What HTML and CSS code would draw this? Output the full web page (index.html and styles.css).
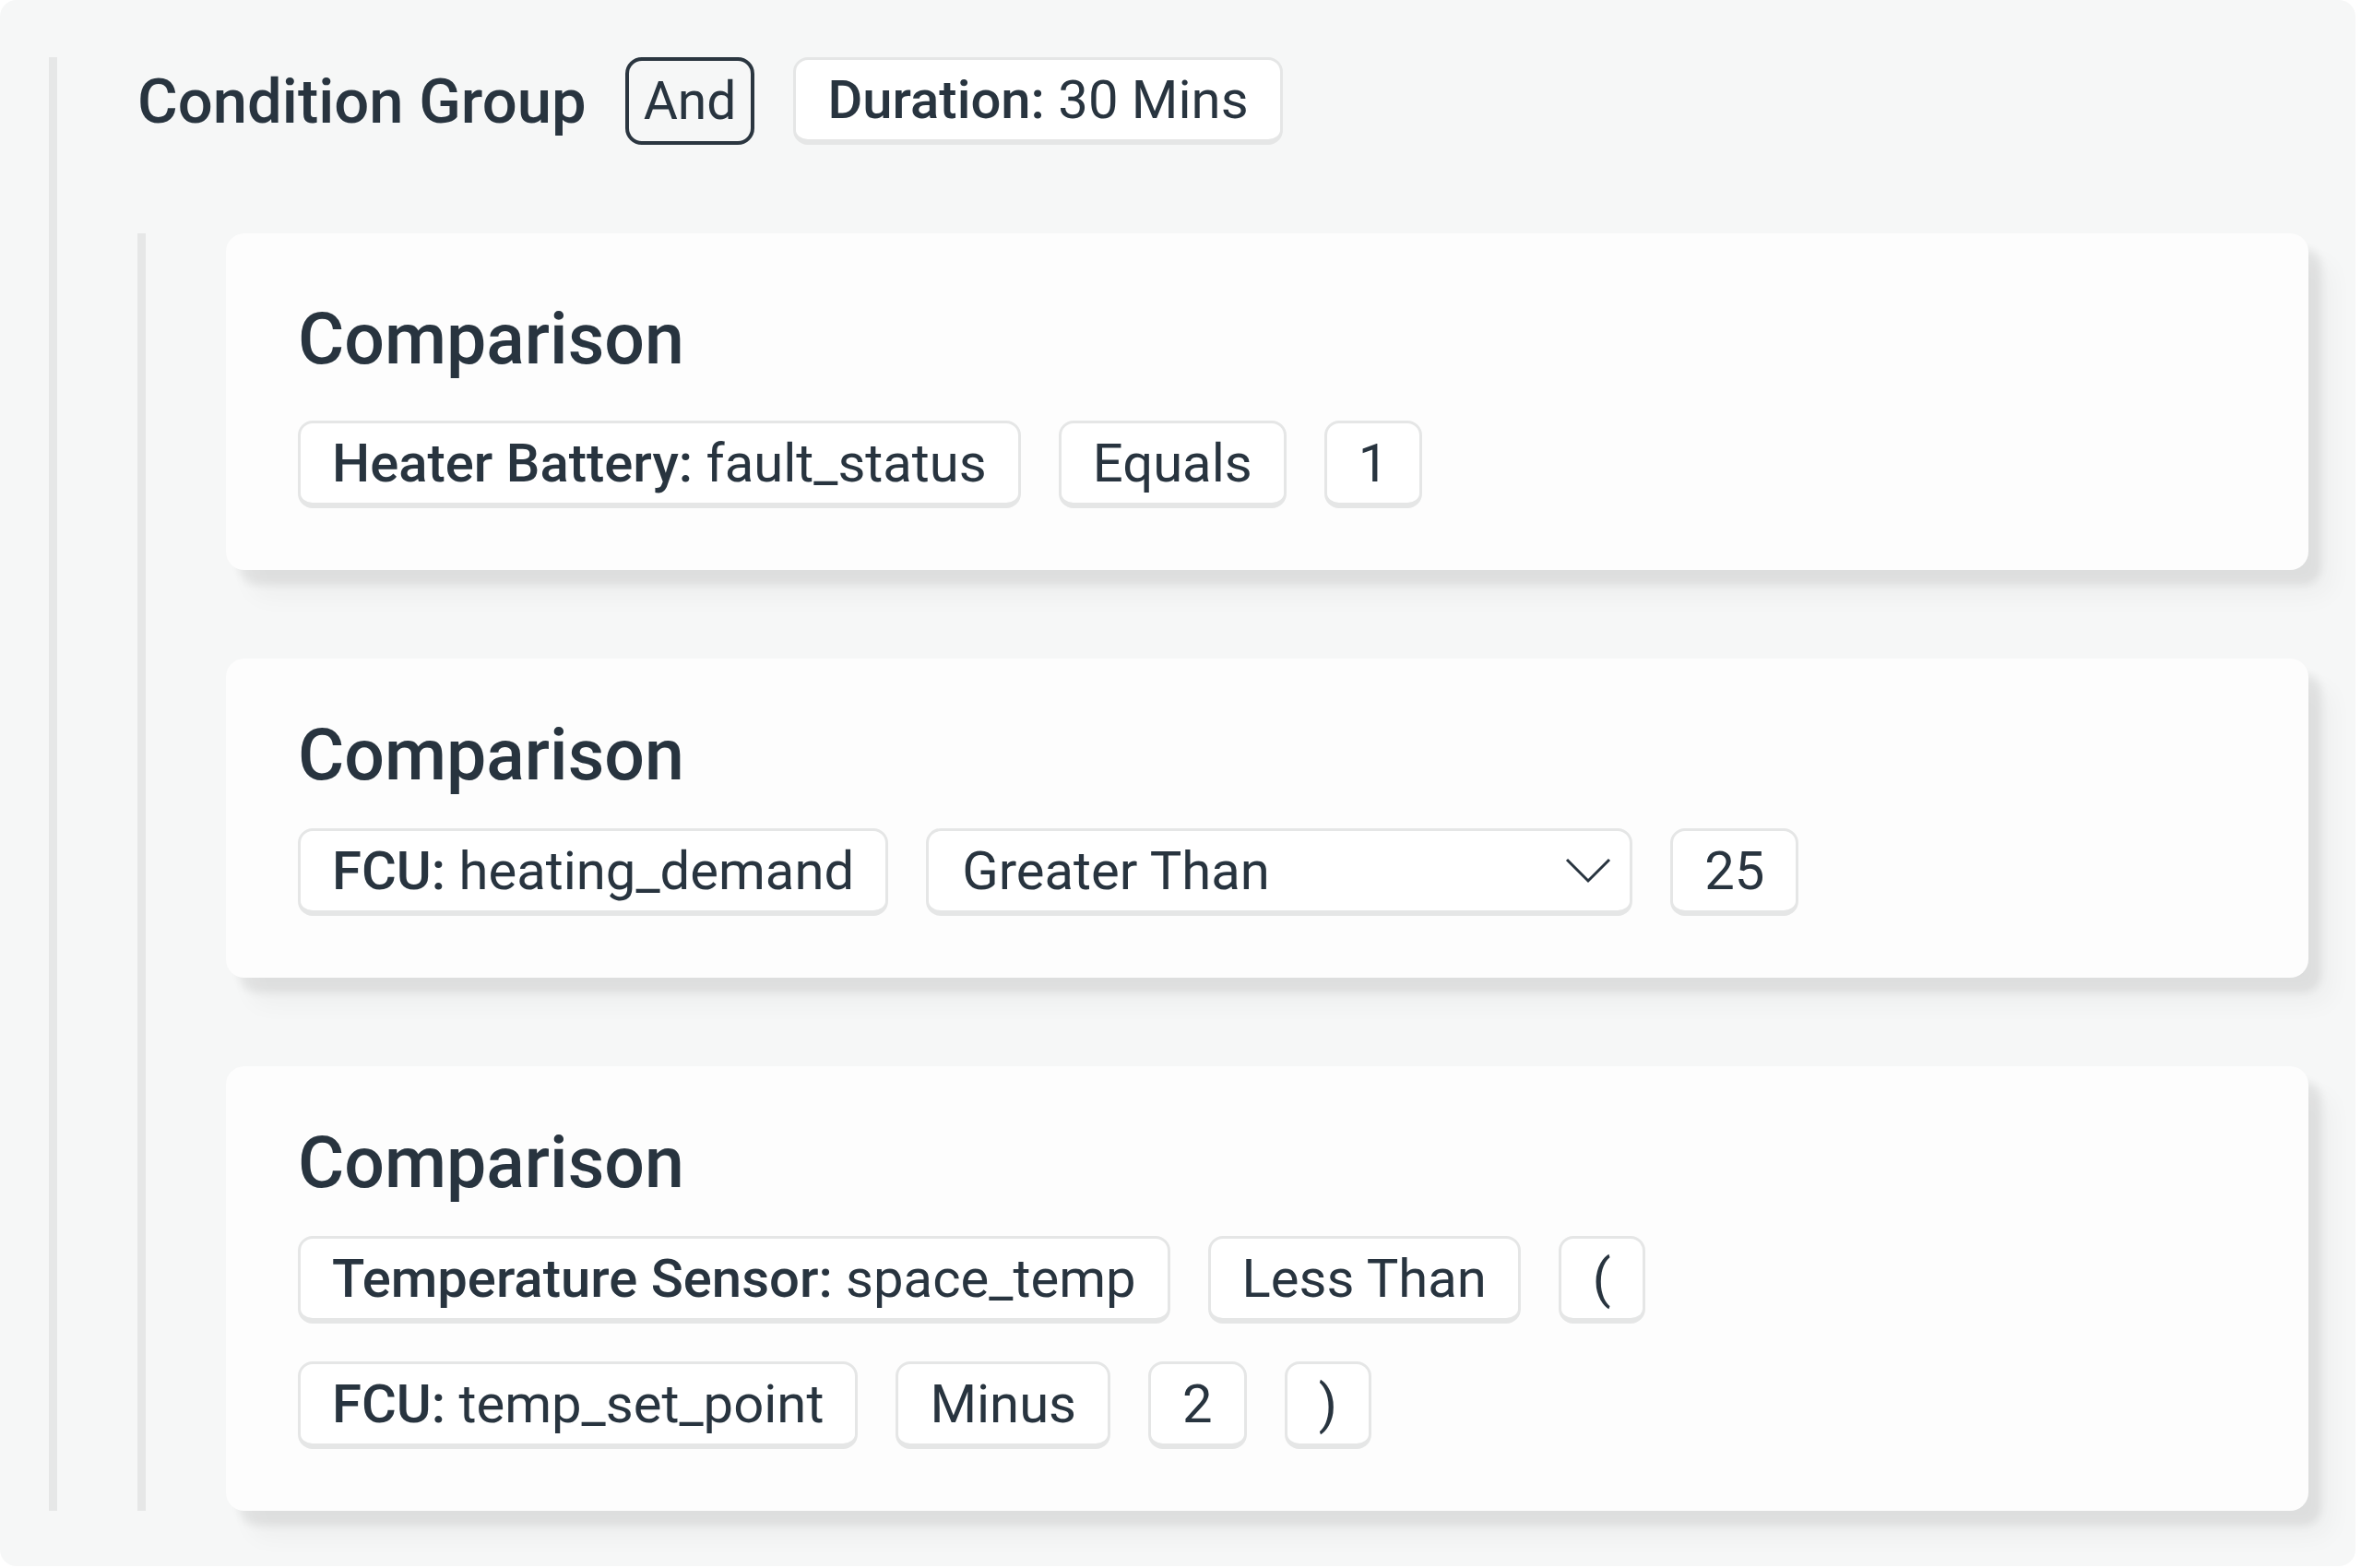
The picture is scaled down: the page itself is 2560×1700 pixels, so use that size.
FILE: index.html
```html
<!DOCTYPE html>
<html lang="en">

<head>
    <meta charset="UTF-8">
    <meta name="viewport" content="width=device-width, initial-scale=1.0">
    <title>Condition Group</title>
    <link rel="stylesheet" href="styles.css">
</head>

<body>
    <div class="panel">
        <div class="group">
            <div class="group-head">
                <div class="group-title">Condition Group</div>
                <div class="tag tag-op">And</div>
                <div class="tag"><b>Duration:</b>&nbsp;30 Mins</div>
            </div>

            <div class="conditions">
                <div class="card card-first">
                    <h2>Comparison</h2>
                    <div class="row">
                        <div class="tag"><b>Heater Battery:</b>&nbsp;fault_status</div>
                        <div class="tag">Equals</div>
                        <div class="tag">1</div>
                    </div>
                </div>

                <div class="card">
                    <h2>Comparison</h2>
                    <div class="row">
                        <div class="tag"><b>FCU:</b>&nbsp;heating_demand</div>
                        <div class="tag tag-select">
                            <span>Greater Than</span>
                            <svg width="50" height="28" viewBox="0 0 50 28">
                                <polyline points="2,2 25,25 48,2" fill="none" stroke="#28343f" stroke-width="3" />
                            </svg>
                        </div>
                        <div class="tag">25</div>
                    </div>
                </div>

                <div class="card">
                    <h2>Comparison</h2>
                    <div class="row">
                        <div class="tag"><b>Temperature Sensor:</b>&nbsp;space_temp</div>
                        <div class="tag">Less Than</div>
                        <div class="tag">(</div>
                    </div>
                    <div class="row">
                        <div class="tag"><b>FCU:</b>&nbsp;temp_set_point</div>
                        <div class="tag">Minus</div>
                        <div class="tag">2</div>
                        <div class="tag">)</div>
                    </div>
                </div>
            </div>
        </div>
    </div>
</body>

</html>
```

FILE: styles.css
```css
body {
    margin: 0;
    padding: 0;
    background: #ffffff;
    font-family: Roboto, "Liberation Sans", sans-serif;
    color: #28343f;
}

.panel {
    width: 2554px;
    height: 1698px;
    box-sizing: border-box;
    padding: 62px 51px 0 53px;
    background: #f6f7f7;
    border-radius: 18px;
}

.group {
    display: flex;
    flex-direction: column;
    gap: 96px;
    border-left: 9px solid #e6e7e7;
    padding-left: 87px;
}

.group-head {
    display: flex;
    align-items: center;
    gap: 42px;
    height: 95px;
}

.group-title {
    font-size: 67px;
    font-weight: 500;
}

.conditions {
    display: flex;
    flex-direction: column;
    gap: 96px;
    border-left: 9px solid #e6e7e7;
    padding-left: 87px;
}

.card {
    background: #fdfdfd;
    border-radius: 20px;
    padding: 60px 78px 67px;
    box-shadow: 14px 16px 10px rgba(0, 0, 0, 0.07),
                26px 30px 26px rgba(0, 0, 0, 0.035);
}

.card h2 {
    margin: 0 0 34px;
    font-size: 77px;
    line-height: 90px;
    font-weight: 500;
}

.card-first {
    padding-top: 70px;
}

.card-first h2 {
    margin-bottom: 43px;
}

.row {
    display: flex;
    gap: 41px;
}

.row + .row {
    margin-top: 41px;
}

.tag {
    display: inline-flex;
    align-items: center;
    box-sizing: border-box;
    height: 95px;
    padding: 0 34px;
    background: #ffffff;
    border: 3px solid #e5e6e6;
    border-bottom-width: 6px;
    border-radius: 16px;
    font-size: 58px;
    white-space: nowrap;
}

.tag b {
    font-weight: 500;
}

.tag-op {
    padding: 0 16px;
    border: 4px solid #2b3640;
    border-radius: 18px;
    background: transparent;
    font-size: 57px;
}

.tag-select {
    width: 766px;
    justify-content: space-between;
    padding: 0 20px 0 36px;
}
```
